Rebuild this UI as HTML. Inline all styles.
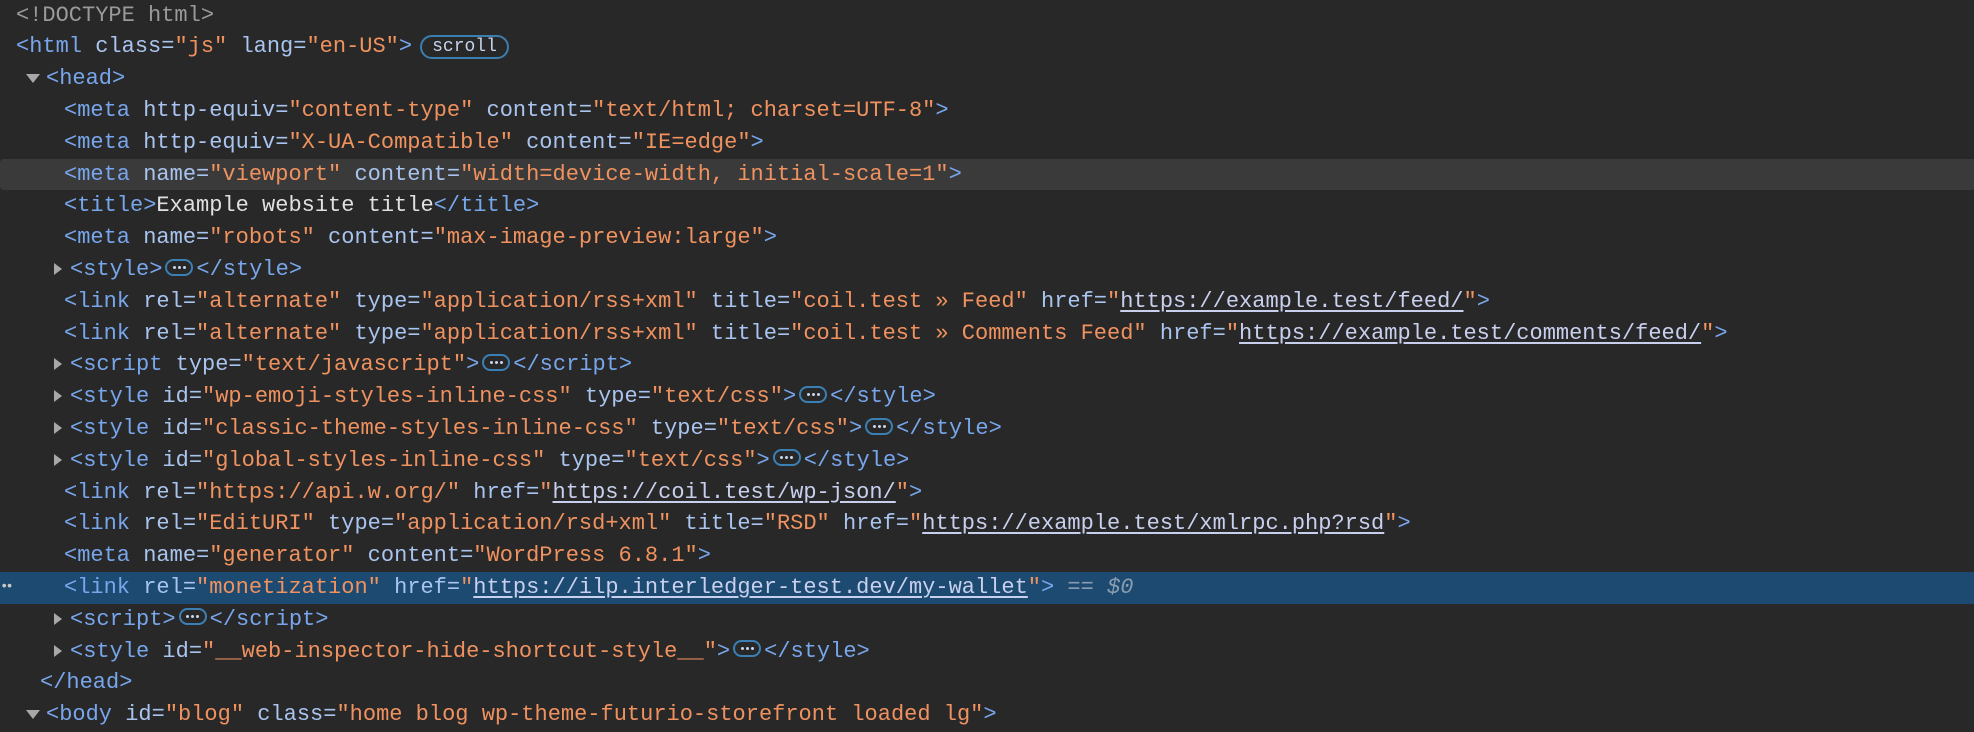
<!DOCTYPE html>
<html><head><meta charset="utf-8"><style>
body{margin:0;width:1974px;height:732px;background:#282828;overflow:hidden;font-family:"Liberation Mono",monospace;font-size:22px;}
.r{position:absolute;left:0;width:1974px;height:31.8px;line-height:31.8px;white-space:pre;color:#a9c4ef;}
.t{color:#78a6ec}.a{color:#a9c4ef}.v{color:#f0925f}.x{color:#e0e0e0}.g{color:#9a9a9a}
.u{color:#c8d0ee;text-decoration:underline;text-underline-offset:3px}
.e{display:inline-flex;align-items:center;justify-content:center;gap:2px;box-sizing:border-box;width:28px;height:17px;border:2px solid #3a80b5;border-radius:9px;vertical-align:middle;margin:0 3px;position:relative;top:-2px}
.e i{display:block;width:3px;height:3px;border-radius:50%;background:#c8d6ee}
.tr{position:absolute;width:0;height:0;border-top:6px solid transparent;border-bottom:6px solid transparent;border-left:8px solid #a8a8a8;top:9px}
.td{position:absolute;width:0;height:0;border-left:7px solid transparent;border-right:7px solid transparent;border-top:9px solid #a8a8a8;top:11px}
.c{position:absolute;top:0}
</style></head><body>
<div class="r" style="top:-0.5px"><span class="c g" style="left:16px">&lt;!DOCTYPE html&gt;</span></div>
<div class="r" style="top:31.3px"><span class="c" style="left:16px"><span class="t">&lt;html</span> class=<span class="v">"js"</span> lang=<span class="v">"en-US"</span><span class="t">&gt;</span></span><span style="position:absolute;left:420px;top:4px;width:85px;height:20px;border:2px solid #3a7fb0;border-radius:12px;font-size:18px;line-height:20px;text-align:center;color:#c5d5ee">scroll</span></div>
<div class="r" style="top:63.1px"><span class="td" style="left:26px"></span><span class="c t" style="left:46px">&lt;head&gt;</span></div>
<div class="r" style="top:94.9px"><span class="c" style="left:64px"><span class="t">&lt;meta</span> http-equiv=<span class="v">"content-type"</span> content=<span class="v">"text/html; charset=UTF-8"</span><span class="t">&gt;</span></span></div>
<div class="r" style="top:126.7px"><span class="c" style="left:64px"><span class="t">&lt;meta</span> http-equiv=<span class="v">"X-UA-Compatible"</span> content=<span class="v">"IE=edge"</span><span class="t">&gt;</span></span></div>
<div class="r" style="top:158.5px;background:#3a3a3a;border-radius:4px 0 0 4px"><span class="c" style="left:64px"><span class="t">&lt;meta</span> name=<span class="v">"viewport"</span> content=<span class="v">"width=device-width, initial-scale=1"</span><span class="t">&gt;</span></span></div>
<div class="r" style="top:190.3px"><span class="c" style="left:64px"><span class="t">&lt;title&gt;</span><span class="x">Example website title</span><span class="t">&lt;/title&gt;</span></span></div>
<div class="r" style="top:222.1px"><span class="c" style="left:64px"><span class="t">&lt;meta</span> name=<span class="v">"robots"</span> content=<span class="v">"max-image-preview:large"</span><span class="t">&gt;</span></span></div>
<div class="r" style="top:253.9px"><span class="tr" style="left:54px"></span><span class="c" style="left:70px"><span class="t">&lt;style&gt;</span><span class="e"><i></i><i></i><i></i></span><span class="t">&lt;/style&gt;</span></span></div>
<div class="r" style="top:285.7px"><span class="c" style="left:64px"><span class="t">&lt;link</span> rel=<span class="v">"alternate"</span> type=<span class="v">"application/rss+xml"</span> title=<span class="v">"coil.test » Feed"</span> href=<span class="v">"</span><span class="u">https://example.test/feed/</span><span class="v">"</span><span class="t">&gt;</span></span></div>
<div class="r" style="top:317.5px"><span class="c" style="left:64px"><span class="t">&lt;link</span> rel=<span class="v">"alternate"</span> type=<span class="v">"application/rss+xml"</span> title=<span class="v">"coil.test » Comments Feed"</span> href=<span class="v">"</span><span class="u">https://example.test/comments/feed/</span><span class="v">"</span><span class="t">&gt;</span></span></div>
<div class="r" style="top:349.3px"><span class="tr" style="left:54px"></span><span class="c" style="left:70px"><span class="t">&lt;script</span> type=<span class="v">"text/javascript"</span><span class="t">&gt;</span><span class="e"><i></i><i></i><i></i></span><span class="t">&lt;/script&gt;</span></span></div>
<div class="r" style="top:381.1px"><span class="tr" style="left:54px"></span><span class="c" style="left:70px"><span class="t">&lt;style</span> id=<span class="v">"wp-emoji-styles-inline-css"</span> type=<span class="v">"text/css"</span><span class="t">&gt;</span><span class="e"><i></i><i></i><i></i></span><span class="t">&lt;/style&gt;</span></span></div>
<div class="r" style="top:412.9px"><span class="tr" style="left:54px"></span><span class="c" style="left:70px"><span class="t">&lt;style</span> id=<span class="v">"classic-theme-styles-inline-css"</span> type=<span class="v">"text/css"</span><span class="t">&gt;</span><span class="e"><i></i><i></i><i></i></span><span class="t">&lt;/style&gt;</span></span></div>
<div class="r" style="top:444.7px"><span class="tr" style="left:54px"></span><span class="c" style="left:70px"><span class="t">&lt;style</span> id=<span class="v">"global-styles-inline-css"</span> type=<span class="v">"text/css"</span><span class="t">&gt;</span><span class="e"><i></i><i></i><i></i></span><span class="t">&lt;/style&gt;</span></span></div>
<div class="r" style="top:476.5px"><span class="c" style="left:64px"><span class="t">&lt;link</span> rel=<span class="v">"https://api.w.org/"</span> href=<span class="v">"</span><span class="u">https://coil.test/wp-json/</span><span class="v">"</span><span class="t">&gt;</span></span></div>
<div class="r" style="top:508.3px"><span class="c" style="left:64px"><span class="t">&lt;link</span> rel=<span class="v">"EditURI"</span> type=<span class="v">"application/rsd+xml"</span> title=<span class="v">"RSD"</span> href=<span class="v">"</span><span class="u">https://example.test/xmlrpc.php?rsd</span><span class="v">"</span><span class="t">&gt;</span></span></div>
<div class="r" style="top:540.1px"><span class="c" style="left:64px"><span class="t">&lt;meta</span> name=<span class="v">"generator"</span> content=<span class="v">"WordPress 6.8.1"</span><span class="t">&gt;</span></span></div>
<div class="r" style="top:571.9px;background:#1c4a70"><span class="c" style="left:0;color:#c8c8c8;font-size:14px;letter-spacing:-3px">••</span><span class="c" style="left:64px"><span class="t">&lt;link</span> rel=<span class="v">"monetization"</span> href=<span class="v">"</span><span class="u">https://ilp.interledger-test.dev/my-wallet</span><span class="v">"</span><span class="t">&gt;</span> <span style="color:#8a9cb0;font-style:italic">== $0</span></span></div>
<div class="r" style="top:603.7px"><span class="tr" style="left:54px"></span><span class="c" style="left:70px"><span class="t">&lt;script&gt;</span><span class="e"><i></i><i></i><i></i></span><span class="t">&lt;/script&gt;</span></span></div>
<div class="r" style="top:635.5px"><span class="tr" style="left:54px"></span><span class="c" style="left:70px"><span class="t">&lt;style</span> id=<span class="v">"__web-inspector-hide-shortcut-style__"</span><span class="t">&gt;</span><span class="e"><i></i><i></i><i></i></span><span class="t">&lt;/style&gt;</span></span></div>
<div class="r" style="top:667.3px"><span class="c t" style="left:40px">&lt;/head&gt;</span></div>
<div class="r" style="top:699.1px"><span class="td" style="left:26px"></span><span class="c" style="left:46px"><span class="t">&lt;body</span> id=<span class="v">"blog"</span> class=<span class="v">"home blog wp-theme-futurio-storefront loaded lg"</span><span class="t">&gt;</span></span></div>
</body></html>
